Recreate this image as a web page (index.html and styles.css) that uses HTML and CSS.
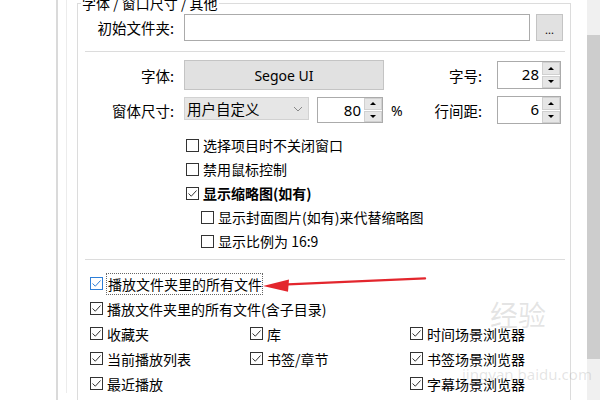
FILE: index.html
```html
<!DOCTYPE html>
<html lang="zh-CN">
<head>
  <meta charset="UTF-8">
  <title>选项 - 字体 / 窗口尺寸 / 其他</title>
  <link rel="stylesheet" href="styles.css">
</head>
<body>
  <div class="frame">
    <div class="rail-outer">
      <div class="rail-inner">
        <fieldset class="group">
          <legend>字体 / 窗口尺寸 / 其他</legend>

          <div class="row folder-row">
            <span class="lbl">初始文件夹:</span>
            <span class="textbox folder"></span>
            <span class="btn dots">...</span>
          </div>

          <div class="sep"></div>

          <div class="row font-row">
            <span class="lbl">字体:</span>
            <span class="btn font-btn">Segoe UI</span>
            <span class="lbl right">字号:</span>
            <span class="spin size">
              <span class="val">28</span>
              <span class="arrows"><span class="up"></span><span class="down"></span></span>
            </span>
          </div>

          <div class="row win-row">
            <span class="lbl">窗体尺寸:</span>
            <span class="combo">
              <span>用户自定义</span>
              <svg class="chev" viewBox="0 0 10 6" width="10" height="6"><polyline points="1,1 5,5 9,1"/></svg>
            </span>
            <span class="spin pct">
              <span class="val">80</span>
              <span class="arrows"><span class="up"></span><span class="down"></span></span>
            </span>
            <span class="unit">%</span>
            <span class="lbl right short">行间距:</span>
            <span class="spin size">
              <span class="val">6</span>
              <span class="arrows"><span class="up"></span><span class="down"></span></span>
            </span>
          </div>

          <div class="checks">
            <div class="check"><span class="box"></span><span>选择项目时不关闭窗口</span></div>
            <div class="check"><span class="box"></span><span>禁用鼠标控制</span></div>
            <div class="check on bold"><span class="box"><svg viewBox="0 0 11 11"><path d="M1.5 5.5 L4.3 8.2 L9.5 2.5"/></svg></span><span>显示缩略图(如有)</span></div>
            <div class="check sub"><span class="box"></span><span>显示封面图片(如有)来代替缩略图</span></div>
            <div class="check sub"><span class="box"></span><span>显示比例为 16:9</span></div>
          </div>

          <div class="sep low"></div>

          <div class="play">
            <div class="check on focus"><span class="box"><svg viewBox="0 0 11 11"><path d="M1.5 5.5 L4.3 8.2 L9.5 2.5"/></svg></span><span class="txt">播放文件夹里的所有文件</span></div>
            <div class="check on"><span class="box"><svg viewBox="0 0 11 11"><path d="M1.5 5.5 L4.3 8.2 L9.5 2.5"/></svg></span><span>播放文件夹里的所有文件(含子目录)</span></div>
            <div class="cols">
              <div class="check on"><span class="box"><svg viewBox="0 0 11 11"><path d="M1.5 5.5 L4.3 8.2 L9.5 2.5"/></svg></span><span>收藏夹</span></div>
              <div class="check on"><span class="box"><svg viewBox="0 0 11 11"><path d="M1.5 5.5 L4.3 8.2 L9.5 2.5"/></svg></span><span>库</span></div>
              <div class="check on"><span class="box"><svg viewBox="0 0 11 11"><path d="M1.5 5.5 L4.3 8.2 L9.5 2.5"/></svg></span><span>时间场景浏览器</span></div>
              <div class="check on"><span class="box"><svg viewBox="0 0 11 11"><path d="M1.5 5.5 L4.3 8.2 L9.5 2.5"/></svg></span><span>当前播放列表</span></div>
              <div class="check on"><span class="box"><svg viewBox="0 0 11 11"><path d="M1.5 5.5 L4.3 8.2 L9.5 2.5"/></svg></span><span>书签/章节</span></div>
              <div class="check on"><span class="box"><svg viewBox="0 0 11 11"><path d="M1.5 5.5 L4.3 8.2 L9.5 2.5"/></svg></span><span>书签场景浏览器</span></div>
              <div class="check on"><span class="box"><svg viewBox="0 0 11 11"><path d="M1.5 5.5 L4.3 8.2 L9.5 2.5"/></svg></span><span>最近播放</span></div>
              <div></div>
              <div class="check on"><span class="box"><svg viewBox="0 0 11 11"><path d="M1.5 5.5 L4.3 8.2 L9.5 2.5"/></svg></span><span>字幕场景浏览器</span></div>
            </div>
          </div>
        </fieldset>
      </div>
    </div>

    <div class="scrollbar"><div class="thumb"></div></div>
  </div>

  <!-- annotation arrow drawn over the dialog -->
  <svg class="arrow" viewBox="258 268 172 26">
    <path d="M282 284.6 L425 278.4" stroke="#e3262d" stroke-width="2.4" stroke-linecap="round" fill="none"/>
    <polygon points="263,286 289,279.5 288,291.8" fill="#e3262d"/>
  </svg>

  <div class="watermark">
    <span class="wm-big">经验</span>
    <span class="wm-small">jingyan.baidu.com</span>
  </div>
</body>
</html>
```

FILE: styles.css
```css
html, body {
  margin: 0;
  padding: 0;
}
body {
  width: 600px;
  height: 400px;
  overflow: hidden;
  position: relative;
  background: #fff;
  color: #000;
  font-family: "Noto Sans", "Noto Sans CJK SC", sans-serif;
  font-size: 14px;
}
.frame {
  display: flex;
  height: 400px;
}
.rail-outer {
  margin-left: 56px;
  border-left: 2px solid #dadada;
  padding-left: 8px;
  width: 522px;
}
.rail-inner {
  border-left: 1px solid #ececec;
  padding-left: 10px;
  height: 400px;
}
.group {
  margin: -7px 0 0 0;
  padding: 1px 0 0 0;
  width: 492px;
  height: 420px;
  border: 1px solid #dcdcdc;
  min-width: 0;
}
.group legend {
  margin-left: 3px;
  padding: 0 1px;
  line-height: 20px;
  font-family: "Noto Sans CJK SC", sans-serif;
}
.row {
  display: flex;
  align-items: center;
}
.lbl {
  width: 96px;
  flex: none;
  text-align: right;
  margin-right: 10px;
  font-family: "Noto Sans CJK SC", sans-serif;
  font-size: 14.5px;
}
.lbl.right {
  width: 98px;
  margin-right: 15px;
}
.lbl.short {
  width: 79px;
}
.folder-row {
  height: 27px;
}
.textbox {
  display: block;
  height: 25px;
  border: 1px solid #ababab;
  background: #fff;
}
.textbox.folder {
  width: 344px;
}
.btn {
  display: flex;
  align-items: center;
  justify-content: center;
  background: #e1e1e1;
  border: 1px solid #c4c4c4;
  box-sizing: border-box;
}
.dots {
  width: 27px;
  height: 27px;
  margin-left: 6px;
  font-size: 11px;
  line-height: 1;
  padding-top: 4px;
}
.sep {
  height: 1px;
  background: #dcdcdc;
  margin: 10px 5px 0 7px;
}
.sep.low {
  margin-top: 6px;
}
.font-row {
  height: 30px;
  margin-top: 8px;
}
.font-btn {
  width: 200px;
  height: 30px;
  font-size: 14px;
}
.spin {
  display: flex;
  box-sizing: border-box;
  border: 1px solid #ababab;
  background: #fff;
}
.spin.size {
  width: 64px;
  height: 28px;
}
.spin.pct {
  width: 66px;
  height: 26px;
  margin-left: 8px;
}
.spin .val {
  flex: 1;
  text-align: right;
  padding-right: 3px;
  font-size: 15px;
  line-height: 24px;
}
.arrows {
  width: 18px;
  display: flex;
  flex-direction: column;
  gap: 1px;
  background: #fff;
}
.up, .down {
  flex: 1;
  background: #e6e6e6;
  border: 1px solid #d0d0d0;
  display: flex;
  align-items: center;
  justify-content: center;
}
.up::after {
  content: "";
  border-left: 3px solid transparent;
  border-right: 3px solid transparent;
  border-bottom: 3px solid #000;
}
.down::after {
  content: "";
  border-left: 3px solid transparent;
  border-right: 3px solid transparent;
  border-top: 3px solid #000;
}
.win-row {
  height: 26px;
  margin-top: 7px;
}
.combo {
  width: 125px;
  height: 23px;
  box-sizing: border-box;
  border: 1px solid #d2d2d2;
  background: #e6e6e6;
  display: flex;
  align-items: center;
  justify-content: space-between;
  padding: 0 5px 0 2px;
  font-family: "Noto Sans CJK SC", sans-serif;
  font-size: 14.5px;
  align-self: flex-start;
}
.chev polyline {
  fill: none;
  stroke: #888;
  stroke-width: 1;
}
.unit {
  margin-left: 8px;
  width: 12px;
}
.checks {
  margin-top: 10px;
  padding-left: 108px;
}
.check {
  display: flex;
  align-items: center;
  height: 24px;
  font-family: "Noto Sans CJK SC", sans-serif;
  white-space: nowrap;
}
.check .box {
  width: 13px;
  height: 13px;
  box-sizing: border-box;
  border: 1px solid #333;
  background: #fff;
  margin-right: 4px;
  flex: none;
  display: flex;
}
.check .box svg {
  width: 11px;
  height: 11px;
}
.check .box path {
  fill: none;
  stroke: #333;
  stroke-width: 1;
}
.check.sub {
  padding-left: 15px;
}
.check.bold {
  font-weight: bold;
}
.play {
  margin-top: 11px;
  padding-left: 12px;
}
.play .check {
  height: 25px;
}
.check.focus .box {
  border-color: #2e7fd8;
}
.check.focus .box path {
  stroke: #2e7fd8;
}
.check.focus .txt {
  border: 1px dotted #666;
  padding: 0 0 0 1px;
  margin-left: -1px;
  line-height: 20px;
}
.cols {
  display: grid;
  grid-template-columns: 160px 160px 160px;
}
.scrollbar {
  margin-left: 7px;
  width: 13px;
  height: 400px;
  background: #f0f0f0;
}
.thumb {
  margin-top: 35px;
  height: 324px;
  background: #cdcdcd;
}
.arrow {
  position: absolute;
  left: 258px;
  top: 268px;
  width: 172px;
  height: 26px;
}
.watermark {
  position: absolute;
  left: 462px;
  top: 294px;
  width: 136px;
  color: rgba(160, 160, 160, 0.28);
  font-family: "Noto Sans CJK SC", sans-serif;
  pointer-events: none;
}
.wm-big {
  display: block;
  margin-left: 28px;
  font-size: 28px;
  line-height: 40px;
}
.wm-small {
  display: block;
  margin-top: 32px;
  font-family: "Noto Sans", sans-serif;
  font-size: 15px;
  line-height: 16px;
}
```
